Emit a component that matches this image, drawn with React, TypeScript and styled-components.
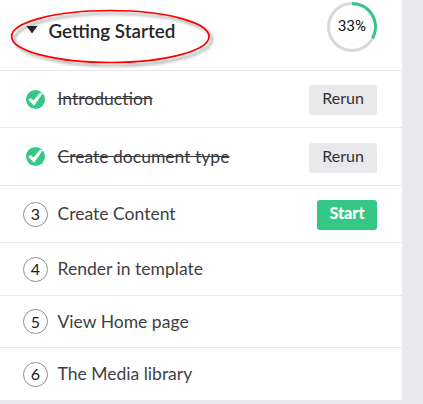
import React from 'react';
import styled, { createGlobalStyle } from 'styled-components';

const GlobalStyle = createGlobalStyle`
  * { box-sizing: border-box; }
  body {
    margin: 0;
    background: #e9e9eb;
    font-family: Lato, "Liberation Sans", sans-serif;
    color: #303033;
    overflow: hidden;
  }
`;

const Panel = styled.main`
  width: 402px;
  height: 400px;
  background: #fff;
  border-radius: 0 0 2px 0;
`;

const Header = styled.header`
  position: relative;
  display: flex;
  align-items: flex-start;
  height: 71px;
  padding: 0 25px 0 26px;
  border-bottom: 1px solid #e9e9eb;
`;

const Caret = styled.svg`
  width: 12px;
  height: 8px;
  margin-top: 26px;
`;

const Title = styled.h1`
  flex: 1;
  margin: 19px 0 0 10.5px;
  font-size: 18.8px;
  line-height: 24px;
  font-weight: 600;
  color: #262629;
`;

const Progress = styled.div`
  display: grid;
  place-items: center;
  width: 50px;
  height: 50px;
  margin-top: 2px;
  font-family: Roboto, Lato, sans-serif;
  font-size: 15px;
  color: #0c0c0d;

  > * { grid-area: 1 / 1; }
`;

const Percent = styled.span`
  line-height: 20px;
  margin-top: -2px;
`;

const Annotation = styled.svg`
  position: absolute;
  left: 0;
  top: 0;
  width: 220px;
  height: 70px;
  overflow: visible;
`;

const List = styled.ul`
  margin: 0;
  padding: 0;
  list-style: none;
`;

const Row = styled.li<{ $height: number }>`
  display: flex;
  align-items: center;
  height: ${(p) => p.$height}px;
  padding: 0 25px 0 23px;
  border-bottom: 1px solid #e9e9eb;

  &:last-child { border-bottom: 0; }
`;

const Marker = styled.span`
  display: flex;
  align-items: center;
  justify-content: center;
  width: 25px;
  height: 25px;
`;

const StepNumber = styled(Marker)`
  border: 1px solid #8f8f92;
  border-radius: 50%;
  font-size: 16px;
  line-height: 20px;
  color: #1b1b1d;
`;

const Label = styled.span<{ $done?: boolean }>`
  flex: 1;
  margin-left: 9.5px;
  font-size: 17.55px;
  line-height: 22px;
  color: ${(p) => (p.$done ? '#3a3a3d' : '#3f3f42')};
  text-decoration: ${(p) => (p.$done ? 'line-through' : 'none')};
`;

const Button = styled.button<{ $primary?: boolean }>`
  width: ${(p) => (p.$primary ? 60 : 68)}px;
  height: 30px;
  margin-top: 2px;
  padding: 0 0 4px;
  border: 0;
  border-radius: 3px;
  background: ${(p) => (p.$primary ? '#35c786' : '#e9e9eb')};
  color: ${(p) => (p.$primary ? '#fff' : '#303033')};
  font: ${(p) => (p.$primary ? '900 16.2px' : '400 16px')}/20px Lato, sans-serif;
`;

const Check = () => (
  <svg width="19" height="19" viewBox="0 0 19 19">
    <circle cx="9.5" cy="9.5" r="9.5" fill="#35c786" />
    <path d="M2.2 9.8 L4.6 8 L7.5 10.6 L14 2.8 L16.7 3.6 L8 15.8 Z" fill="#fff" />
  </svg>
);

type Step = { label: string; height: number; done?: boolean; action?: string };

const steps: Step[] = [
  { label: 'Introduction', height: 57, done: true, action: 'Rerun' },
  { label: 'Create document type', height: 58, done: true, action: 'Rerun' },
  { label: 'Create Content', height: 57, action: 'Start' },
  { label: 'Render in template', height: 53 },
  { label: 'View Home page', height: 52 },
  { label: 'The Media library', height: 52 },
];

export default function App() {
  return (
    <>
      <GlobalStyle />
      <Panel>
        <Header>
          <Caret viewBox="0 0 12 8">
            <path d="M0.5 0 H11.5 L6 7.5 Z" fill="#262629" />
          </Caret>
          <Title>Getting Started</Title>
          <Progress>
            <svg width="50" height="50" viewBox="0 0 50 50" fill="none" strokeWidth="3">
              <circle cx="25" cy="25" r="23.5" stroke="#d8d7d9" />
              <path d="M25 1.5 A23.5 23.5 0 0 1 45.6 36.3" stroke="#35c786" />
            </svg>
            <Percent>33%</Percent>
          </Progress>
          <Annotation viewBox="0 0 220 70" fill="none">
            <defs>
              <filter id="shadow" x="-10%" y="-20%" width="125%" height="150%">
                <feDropShadow dx="3" dy="3" stdDeviation="1.5" floodColor="#000" floodOpacity="0.42" />
              </filter>
            </defs>
            <ellipse cx="110.3" cy="36.5" rx="98.7" ry="26" stroke="#f00" strokeWidth="1.7" filter="url(#shadow)" />
          </Annotation>
        </Header>
        <List>
          {steps.map((step, i) => (
            <Row key={step.label} $height={step.height}>
              {step.done ? <Marker><Check /></Marker> : <StepNumber>{i + 1}</StepNumber>}
              <Label $done={step.done}>{step.label}</Label>
              {step.action && <Button $primary={!step.done}>{step.action}</Button>}
            </Row>
          ))}
        </List>
      </Panel>
    </>
  );
}
